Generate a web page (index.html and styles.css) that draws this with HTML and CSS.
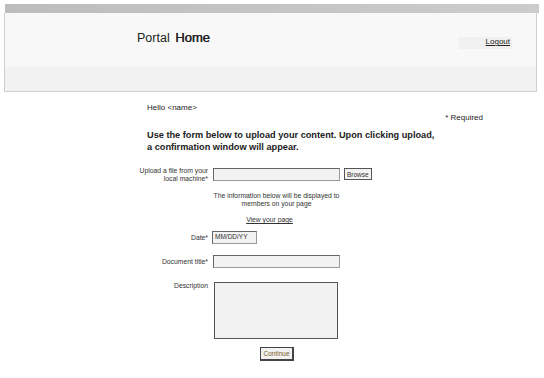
FILE: index.html
```html
<!DOCTYPE html>
<html lang="en">
<head>
    <meta charset="utf-8" />
    <title>Portal Home - Upload</title>
    <link rel="stylesheet" href="styles.css">
</head>
<body>
    <div class="top-bar"></div>
    <div class="header">
        <div class="header-main">
            <h1 class="title">Portal <b>Home</b></h1>
            <div class="logout-box"><a href="#">Logout</a></div>
        </div>
        <div class="header-sub"></div>
    </div>

    <div class="content">
        <p class="hello">Hello &lt;name&gt;</p>
        <p class="required">* Required</p>
        <p class="intro">Use the form below to upload your content. Upon clicking upload,<br>a confirmation window will appear.</p>
    </div>

    <form class="upload-form" onsubmit="return false">
        <div class="row">
            <label class="label" for="file">Upload a file from your<br>local machine*</label>
            <div class="field">
                <input type="text" id="file" class="text-input wide" />
                <button type="button" class="btn">Browse</button>
            </div>
        </div>

        <div class="row info-row">
            <span></span>
            <div class="info">
                <p>The information below will be displayed to<br>members on your page</p>
                <a href="#" class="view-link">View your page</a>
            </div>
        </div>

        <div class="row date-row">
            <label class="label" for="date">Date*</label>
            <div class="field">
                <input type="text" id="date" class="text-input date" value="MM/DD/YY" />
            </div>
        </div>

        <div class="row title-row">
            <label class="label" for="doctitle">Document title*</label>
            <div class="field">
                <input type="text" id="doctitle" class="text-input wide" />
            </div>
        </div>

        <div class="row desc-row">
            <label class="label" for="description">Description</label>
            <div class="field">
                <textarea id="description" class="text-input area"></textarea>
            </div>
        </div>

        <div class="actions">
            <button type="submit" class="btn continue">Continue</button>
        </div>
    </form>
</body>
</html>
```

FILE: styles.css
```css
* { box-sizing: border-box; margin: 0; padding: 0; }
body {
    font-family: "Liberation Sans", Arial, sans-serif;
    background: #fff;
    color: #222;
}
.top-bar {
    height: 9px;
    margin: 4px 5px 0 5px;
    background: linear-gradient(to right, #bdbdbd, #cccccc);
}
.header {
    margin: 0 7px 0 4px;
    border: 1px solid #d0d0d0;
    border-top: none;
}
.header-main {
    height: 54px;
    background: #f8f8f8;
    display: flex;
    align-items: flex-start;
}
.title {
    font-size: 12.5px;
    font-weight: normal;
    line-height: 15px;
    padding: 17px 0 0 132px;
    color: #222;
}
.title b {
    font-size: 13px;
    font-weight: normal;
    margin-left: 2px;
    text-shadow: 0.4px 0 0 #222;
}
.logout-box {
    margin: 24px 24px 0 auto;
    width: 53px;
    height: 12px;
    background: #f0f0f0;
    text-align: right;
    font-size: 8px;
    line-height: 10px;
}
.logout-box a {
    color: #222;
    margin-right: 2px;
}
.header-sub {
    height: 24px;
    background: #f2f2f2;
}
.content {
    margin-left: 147px;
    width: 336px;
    font-size: 8px;
}
.hello {
    margin-top: 11px;
    line-height: 10px;
}
.required {
    text-align: right;
    margin-top: 0;
    line-height: 10px;
}
.intro {
    margin-top: 6px;
    font-weight: bold;
    font-size: 9.2px;
    line-height: 12px;
}
.upload-form {
    margin-left: 120px;
    margin-top: 14px;
    font-size: 6.8px;
    color: #333;
}
.row {
    display: grid;
    grid-template-columns: 88px auto;
    column-gap: 5px;
    align-items: start;
}
.label {
    text-align: right;
    line-height: 7.5px;
}
.field {
    display: flex;
    gap: 4px;
    align-items: flex-start;
}
.text-input {
    height: 13px;
    background: #f2f2f2;
    border: 1px solid #666;
    border-right-color: #999;
    border-bottom-color: #999;
    font-family: inherit;
    font-size: 6.5px;
    color: #333;
    padding: 0 2px;
    margin-top: 1px;
}
.wide { width: 127px; }
.date {
    width: 45px;
    margin-left: -1px;
    padding-bottom: 3px;
}
.area {
    width: 124px;
    height: 57px;
    resize: none;
    margin-left: 1px;
    border: 1px solid #555;
}
.btn {
    height: 12px;
    padding: 0 2px;
    background: #f2f2f2;
    border: 1px solid #555;
    font-family: inherit;
    font-size: 6.5px;
    color: #333;
    margin-top: 1px;
}
.info-row { margin-top: 10px; }
.info {
    width: 127px;
    text-align: center;
    line-height: 8px;
}
.view-link {
    display: inline-block;
    margin-top: 8px;
    margin-left: -14px;
    color: #333;
}
.date-row { margin-top: 6px; }
.date-row .label,
.title-row .label { padding-top: 4px; }
.title-row { margin-top: 10px; }
.desc-row { margin-top: 13px; }
.desc-row .label { padding-top: 1px; }
.actions {
    margin: 7px 0 0 140px;
}
.continue {
    height: 14px;
    width: 34px;
    padding: 0;
    border: 1px solid #444;
    border-width: 1px 2px 2px 1px;
    color: #7a5a20;
}
```
